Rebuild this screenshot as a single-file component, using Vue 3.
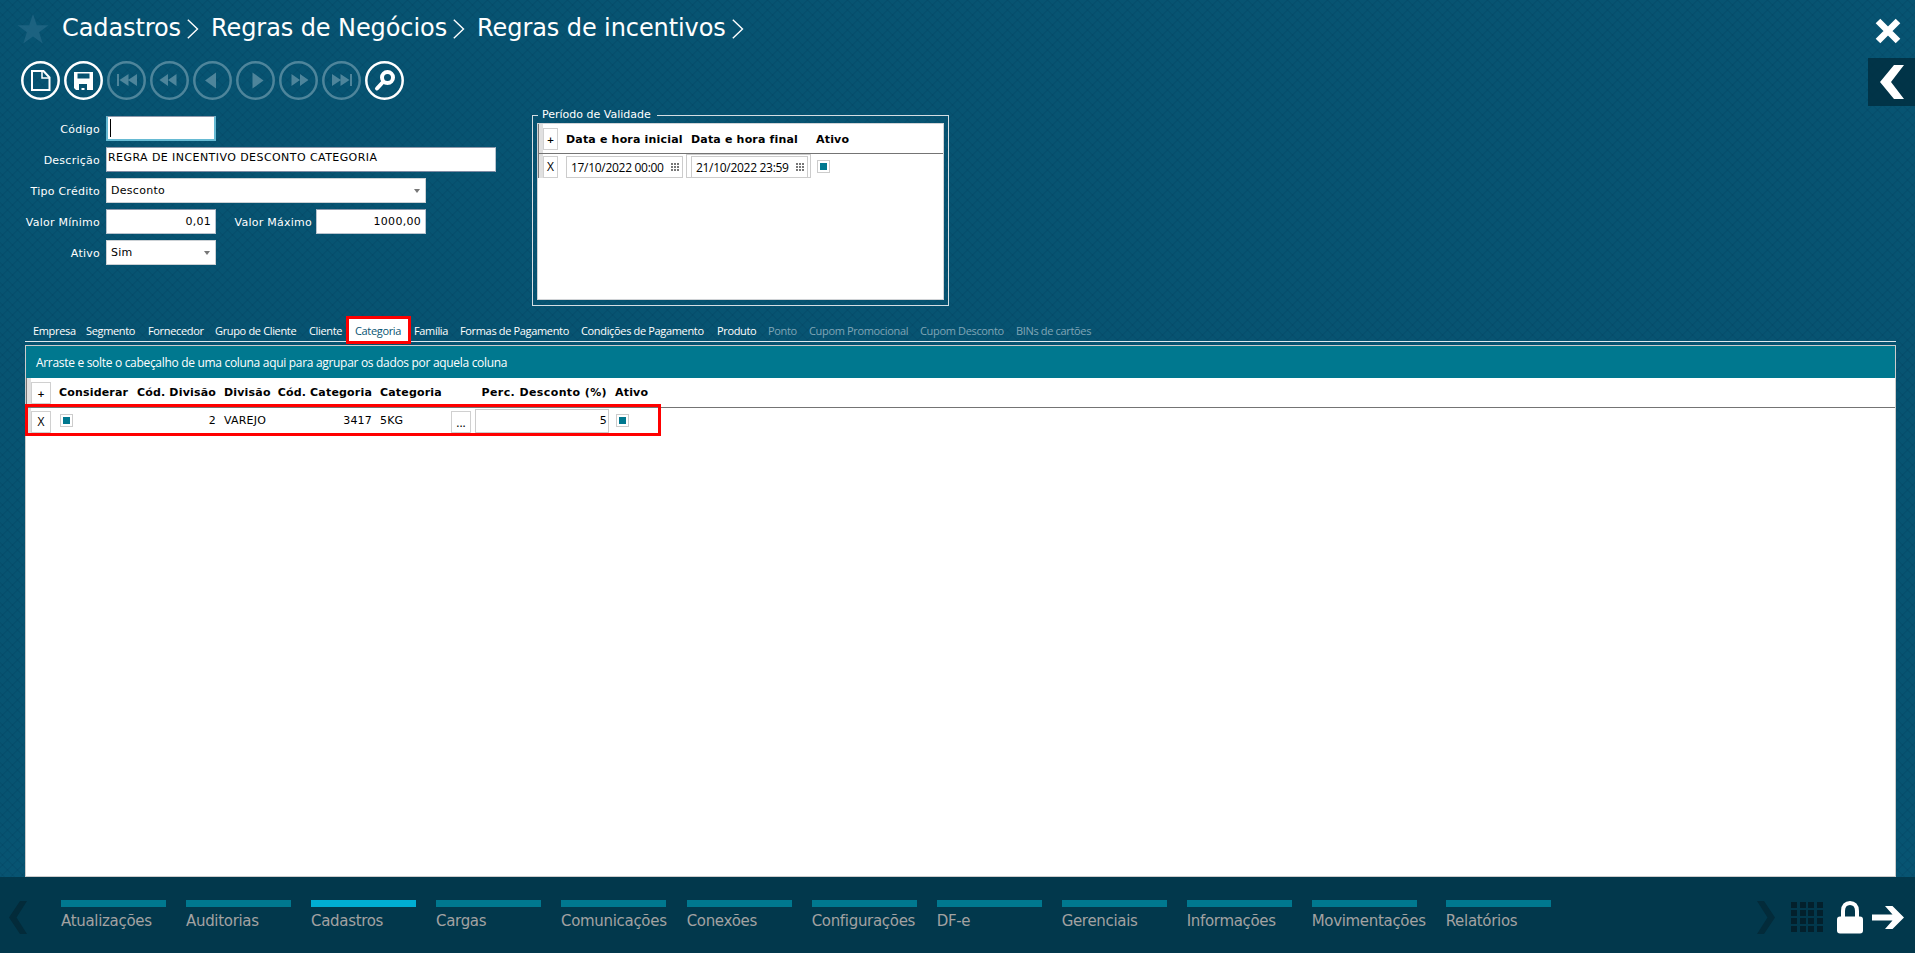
<script setup>
import { ref } from 'vue'

const breadcrumb = ['Cadastros', 'Regras de Negócios', 'Regras de incentivos']

const toolbar = [
  { id: 'new', enabled: true },
  { id: 'save', enabled: true },
  { id: 'first', path: 'M10 13h2v12h-2z M12.500 19l9-6v12z M21 19l9-6v12z', enabled: false },
  { id: 'rewind', path: 'M9.500 19l8.500-6v12z M18 19l8.500-6v12z', enabled: false },
  { id: 'previous', path: 'M12 19.500l11-8v16z', enabled: false },
  { id: 'next', path: 'M27.500 19.500l-11-8v16z', enabled: false },
  { id: 'forward', path: 'M29.500 19l-8.500-6v12z M21 19l-8.500-6v12z', enabled: false },
  { id: 'last', path: 'M28 13h2v12h-2z M27.500 19l-9-6v12z M19 19l-9-6v12z', enabled: false },
  { id: 'search', enabled: true },
]

const tabs = [
  { label: 'Empresa', width: 53 },
  { label: 'Segmento', width: 62 },
  { label: 'Fornecedor', width: 67 },
  { label: 'Grupo de Cliente', width: 94 },
  { label: 'Cliente', width: 46 },
  { label: 'Categoria', width: 59 },
  { label: 'Família', width: 46 },
  { label: 'Formas de Pagamento', width: 121 },
  { label: 'Condições de Pagamento', width: 136 },
  { label: 'Produto', width: 51 },
  { label: 'Ponto', width: 41, disabled: true },
  { label: 'Cupom Promocional', width: 111, disabled: true },
  { label: 'Cupom Desconto', width: 96, disabled: true },
  { label: 'BINs de cartões', width: 88, disabled: true },
]
const activeTab = ref('Categoria')

const modules = [
  'Atualizações', 'Auditorias', 'Cadastros', 'Cargas', 'Comunicações', 'Conexões',
  'Configurações', 'DF-e', 'Gerenciais', 'Informações', 'Movimentações', 'Relatórios',
]
const activeModule = ref('Cadastros')

const periods = [{ start: '17/10/2022 00:00', end: '21/10/2022 23:59' }]
const categories = [
  { divisionCode: 2, division: 'VAREJO', categoryCode: 3417, category: '5KG', discount: 5 },
]
</script>

<template>
  <div class="app">
    <header class="topbar">
      <svg class="star" viewBox="0 0 32 30">
        <path d="M16 0l3.800 11.300H31.500l-9.400 6.900 3.600 11.300L16 22.600l-9.700 6.900 3.600-11.300L.5 11.300h11.700z" />
      </svg>
      <nav class="breadcrumb">
        <span v-for="item in breadcrumb" :key="item" class="crumb">
          {{ item }}
          <svg viewBox="0 0 12 20"><path d="M.8 .8L10.500 10 .8 19.200" /></svg>
        </span>
      </nav>
      <svg class="close" viewBox="0 0 26 26"><path d="M3 3l20 20M23 3L3 23" /></svg>
    </header>

    <button class="side-toggle">
      <svg viewBox="0 0 24 34"><path d="M14 0h10L11 17l13 17H14L0 17z" /></svg>
    </button>

    <div class="toolbar">
      <button v-for="tool in toolbar" :key="tool.id" :class="{ off: !tool.enabled }">
        <svg viewBox="0 0 39 39">
          <circle class="ring" cx="19.500" cy="19.500" r="18.200" />
          <template v-if="tool.id === 'new'">
            <path class="line" d="M11 10h11.500l6 6.500V29H11z" />
            <path class="thin" d="M21 10v7h7" />
          </template>
          <path
            v-else-if="tool.id === 'save'"
            fill-rule="evenodd"
            d="M10 11h19v18H12l-2-2z M13.500 12.500v5h12v-5z M15 23v6h8v-6z M17.500 27h3v2h-3z"
          />
          <template v-else-if="tool.id === 'search'">
            <circle class="lens" cx="22.500" cy="16.500" r="5.500" />
            <path class="handle" d="M18 21l-6 6.500" />
          </template>
          <path v-else :d="tool.path" />
        </svg>
      </button>
    </div>

    <section class="details">
      <form class="fields" @submit.prevent>
        <div class="field">
          <label>Código</label>
          <div class="box short focused"><i class="caret"></i></div>
        </div>
        <div class="field">
          <label>Descrição</label>
          <div class="box long description">REGRA DE INCENTIVO DESCONTO CATEGORIA</div>
        </div>
        <div class="field">
          <label>Tipo Crédito</label>
          <div class="box medium select">Desconto<i class="arrow"></i></div>
        </div>
        <div class="field">
          <label>Valor Mínimo</label>
          <div class="box short number">0,01</div>
          <label class="second">Valor Máximo</label>
          <div class="box short number">1000,00</div>
        </div>
        <div class="field">
          <label>Ativo</label>
          <div class="box short select">Sim<i class="arrow"></i></div>
        </div>
      </form>

      <fieldset class="validity">
        <legend>Período de Validade</legend>
        <div class="period-grid">
          <div class="period-row period-head">
            <button class="mini plus">+</button>
            <b>Data e hora inicial</b>
            <b class="col-end">Data e hora final</b>
            <b class="col-active">Ativo</b>
          </div>
          <div v-for="period in periods" :key="period.start" class="period-row">
            <button class="mini">X</button>
            <div class="date">
              <span>{{ period.start }}</span>
              <svg viewBox="0 0 8 8"><path d="M0 1h8M0 4h8M0 7h8" /></svg>
            </div>
            <div class="date-cell">
              <div class="date">
                <span>{{ period.end }}</span>
                <svg viewBox="0 0 8 8"><path d="M0 1h8M0 4h8M0 7h8" /></svg>
              </div>
            </div>
            <i class="check"></i>
          </div>
        </div>
      </fieldset>
    </section>

    <nav class="tabs">
      <button
        v-for="tab in tabs"
        :key="tab.label"
        :class="{ active: tab.label === activeTab, disabled: tab.disabled }"
        :style="{ width: tab.width + 'px' }"
        @click="activeTab = tab.label"
      >
        {{ tab.label }}
      </button>
    </nav>

    <main class="data-grid">
      <div class="group-band">Arraste e solte o cabeçalho de uma coluna aqui para agrupar os dados por aquela coluna</div>
      <div class="grid-row grid-head">
        <button class="mini plus">+</button>
        <b>Considerar</b>
        <b class="right">Cód. Divisão</b>
        <b>Divisão</b>
        <b class="right">Cód. Categoria</b>
        <b>Categoria</b>
        <span></span>
        <b class="right percent">Perc. Desconto (%)</b>
        <b class="last">Ativo</b>
      </div>
      <div v-for="row in categories" :key="row.categoryCode" class="grid-row grid-item">
        <button class="mini">X</button>
        <i class="check"></i>
        <span class="right">{{ row.divisionCode }}</span>
        <span>{{ row.division }}</span>
        <span class="right">{{ row.categoryCode }}</span>
        <span>{{ row.category }}</span>
        <button class="mini dots">...</button>
        <div class="discount">{{ row.discount }}</div>
        <i class="check last"></i>
      </div>
    </main>

    <footer class="modules">
      <svg class="page-arrow" viewBox="0 0 18 33"><path d="M11 0h7L7.500 16.500 18 33h-7L0 16.500z" /></svg>
      <div class="module-list">
        <a v-for="name in modules" :key="name" :class="{ active: name === activeModule }">{{ name }}</a>
      </div>
      <svg class="page-arrow next" viewBox="0 0 18 33"><path d="M0 0h7l11 16.500L7 33H0l10.500-16.500z" /></svg>
      <div class="apps"><i v-for="n in 16" :key="n"></i></div>
      <svg class="lock" viewBox="0 0 26 33">
        <path class="shackle" d="M6 17v-7C6 4.500 9 2 13 2s7 2.500 7 8v7" />
        <rect y="15.500" width="26" height="17" rx="3" />
      </svg>
      <svg class="exit" viewBox="0 0 32 23">
        <path d="M0 8.500h20.500L13 0h7.500L32 11.500 20.500 23H13l7.500-8.500H0z" />
      </svg>
    </footer>
  </div>
</template>

<style>
body {
  margin: 0;
}
</style>

<style scoped>
*,
*::after {
  box-sizing: border-box;
}

.app {
  position: relative;
  display: flex;
  flex-direction: column;
  width: 1915px;
  height: 953px;
  overflow: hidden;
  background:
    repeating-linear-gradient(45deg, rgba(0, 30, 60, 0.09) 0 1px, transparent 1px 7.071px),
    repeating-linear-gradient(-45deg, rgba(0, 30, 60, 0.09) 0 1px, transparent 1px 7.071px),
    #075472;
  color: #fff;
  font-family: "DejaVu Sans", Verdana, sans-serif;
  font-size: 11px;
}

button {
  padding: 0;
  border: 0;
  background: none;
  color: inherit;
  font: inherit;
}

svg {
  display: block;
  flex: none;
  fill: currentColor;
}

.topbar {
  display: flex;
  align-items: flex-start;
  height: 61px;
  padding: 0 14px 0 17px;
}

.star {
  width: 32px;
  height: 30px;
  margin-top: 14px;
  color: #1c6280;
}

.breadcrumb {
  display: flex;
  flex: 1;
  margin-left: 13px;
  font-size: 24px;
  line-height: 57px;
  letter-spacing: -0.09px;
  white-space: nowrap;
}

.crumb {
  display: flex;
  align-items: center;
  gap: 6px;
  margin-right: 12px;
}

.crumb svg {
  width: 12px;
  height: 20px;
  margin-top: 1px;
  fill: none;
  stroke: #fff;
  stroke-width: 1.4;
}

.close {
  width: 26px;
  height: 26px;
  margin-top: 18px;
  stroke: #fff;
  stroke-width: 6.5;
}

.side-toggle {
  position: absolute;
  top: 58px;
  right: 0;
  display: flex;
  align-items: center;
  width: 47px;
  height: 48px;
  padding-left: 12px;
  background: rgba(0, 43, 60, 0.78);
}

.side-toggle svg {
  width: 24px;
  height: 34px;
}

.toolbar {
  display: flex;
  gap: 4px;
  height: 54px;
  padding-left: 21px;
}

.toolbar button {
  width: 39px;
  height: 39px;
}

.toolbar .off {
  color: #4e859b;
}

.ring,
.line,
.thin,
.lens,
.handle {
  fill: none;
  stroke: currentColor;
}

.ring {
  stroke-width: 2.5;
}

.line {
  stroke-width: 2;
}

.thin {
  stroke-width: 1.5;
}

.lens {
  stroke-width: 4;
}

.handle {
  stroke-width: 4;
  stroke-linecap: round;
}

.details {
  display: flex;
  height: 201px;
}

.fields {
  display: flex;
  flex-direction: column;
  gap: 6px;
  width: 532px;
  padding-top: 1px;
}

.field {
  display: flex;
  align-items: center;
  height: 25px;
}

.field label {
  width: 106px;
  padding: 2px 6px 0 0;
  letter-spacing: 0.25px;
  text-align: right;
  white-space: nowrap;
}

.field .second {
  width: 100px;
  padding-right: 4px;
}

.box {
  display: flex;
  align-items: center;
  height: 25px;
  padding: 0 5px;
  border: 1px solid #b9c4cf;
  border-top-color: #8d99ab;
  background: #fff;
  color: #000;
  letter-spacing: 0.28px;
  white-space: nowrap;
}

.short {
  width: 110px;
}

.medium {
  width: 320px;
}

.long {
  width: 390px;
}

.focused {
  padding: 0 2px;
  border: 2px solid #66bad3;
  border-top: 1px solid #8d99ab;
}

.caret {
  width: 1px;
  height: 18px;
  background: #000;
}

.description {
  padding: 0 1px 5px;
  border-bottom-color: #7d8ba3;
  letter-spacing: 0.43px;
}

.number {
  justify-content: flex-end;
  padding-right: 4px;
}

.select {
  justify-content: space-between;
  padding: 0 5px 0 4px;
  border-color: #ccd1d5;
}

.arrow {
  border: 3.5px solid transparent;
  border-top: 4px solid #777;
  border-bottom: 0;
}

.validity {
  display: flex;
  flex-direction: column;
  width: 417px;
  min-width: 0;
  height: 198px;
  margin: -7px 0 0;
  padding: 1px 4px 5px;
  border: 1px solid #d5dee3;
}

.validity legend {
  height: 14px;
  margin-left: 1px;
  padding: 0 6px 0 4px;
  line-height: 14px;
}

.period-grid {
  height: 178px;
  border: 1px solid #d0d3d6;
  background: #fff;
  color: #000;
}

/* the grey strip on the left is the row indicator */
.period-row,
.grid-row {
  display: grid;
  padding-left: 5px;
  background: linear-gradient(90deg, #777 1px, #e0e0e0 1px 5px, transparent 5px) no-repeat 0 0 / 5px 100%;
  white-space: nowrap;
}

.period-row {
  grid-template-columns: 23px 120px 131px 60px;
  align-items: end;
  height: 24px;
}

.period-head {
  align-items: center;
  height: 30px;
  border-bottom: 1px solid #747474;
}

.period-head b {
  padding-top: 2px;
}

.period-head b,
.grid-head b {
  letter-spacing: 0.18px;
}

.period-head .col-end {
  padding-left: 5px;
}

.col-active {
  margin-left: -1px;
}

.period-row .check {
  align-self: center;
}

.mini {
  display: grid;
  place-items: center;
  width: 15px;
  height: 22px;
  border: 1px solid #d0d0d0;
  background: #fff;
  color: #000;
  font-family: "Open Sans", "Segoe UI", sans-serif;
  font-size: 12px;
  line-height: 14px;
}

.plus {
  padding-top: 2px;
  font-family: "DejaVu Sans", Verdana, sans-serif;
  font-size: 9px;
  font-weight: bold;
}

.date {
  display: flex;
  align-items: center;
  justify-content: space-between;
  width: 117px;
  height: 22px;
  padding: 0 3px 0 4px;
  border: 1px solid #ccc;
  font-family: "Open Sans", "Segoe UI", sans-serif;
  font-size: 12px;
  letter-spacing: -0.3px;
}

.date svg {
  width: 8px;
  height: 8px;
  fill: none;
  stroke: #777;
  stroke-width: 2;
  stroke-dasharray: 2 1;
}

.date-cell {
  width: 125px;
  height: 24px;
  padding: 1px 0 0 4px;
  border: 1px solid #ccc;
}

.date-cell .date {
  height: 21px;
  border-bottom: 0;
}

.check {
  width: 13px;
  height: 13px;
  border: 1px solid #ccc;
  background: linear-gradient(#00788f, #00788f) center / 7px 7px no-repeat #fff;
}

.tabs {
  display: flex;
  width: 1871px;
  height: 26px;
  margin-left: 25px;
  padding: 3px 0 0 2px;
  border-bottom: 1px solid #dde8ec;
  font-family: "Open Sans", "Segoe UI", sans-serif;
  font-size: 11px;
  letter-spacing: -0.34px;
}

.tabs button {
  flex: none;
  height: 22px;
  padding: 1px 0 0 6px;
  letter-spacing: inherit;
  line-height: 22px;
  text-align: left;
  white-space: nowrap;
}

.tabs .active {
  position: relative;
  z-index: 1;
  background: #fff;
  box-shadow: 0 0 0 3px #f00;
  color: #075472;
}

.tabs .disabled {
  color: #7fa5b6;
}

.data-grid {
  position: relative;
  display: flex;
  flex: 1;
  flex-direction: column;
  width: 1871px;
  margin: 3px 0 0 25px;
  border: 1px solid #ccc;
  background: #fff;
  color: #000;
}

.group-band {
  height: 32px;
  padding-left: 10px;
  background: #00788f;
  color: #fff;
  font-family: "Open Sans", "Segoe UI", sans-serif;
  font-size: 12px;
  line-height: 34px;
  letter-spacing: -0.31px;
}

.grid-row {
  grid-template-columns: 20px 78px 87px 57px 99px 79px 20px 138px 50px;
  align-items: center;
  height: 30px;
}

.grid-row > * {
  margin-left: 8px;
}

.grid-row > .mini {
  width: 20px;
  margin-left: 0;
}

.grid-row > .right {
  margin: 0;
  text-align: right;
}

.grid-row > .percent {
  margin-right: 2px;
  letter-spacing: 0.4px;
}

.grid-row > .last {
  margin-left: 6px;
}

.grid-head {
  border-bottom: 1px solid #747474;
}

.grid-item {
  height: 25px;
  letter-spacing: 0.2px;
}

.grid-item > .mini {
  align-self: end;
}

.grid-item > .check {
  margin-left: 9px;
}

.grid-item > .check.last {
  margin-left: 7px;
}

.grid-item > .dots {
  padding-top: 2px;
}

.grid-item::after {
  content: "";
  position: absolute;
  top: 58px;
  left: -1px;
  width: 636px;
  height: 32px;
  border: 3px solid #f00;
}

.grid-row > .discount {
  height: 24px;
  margin: 0 0 0 4px;
  padding-right: 1px;
  border: 1px solid #ccc;
  line-height: 22px;
  text-align: right;
}

.modules {
  display: flex;
  align-items: flex-start;
  height: 76px;
  padding: 24px 11px 0 9px;
  background: #02384c;
}

.page-arrow {
  width: 18px;
  height: 33px;
  color: #032b3a;
}

.module-list {
  display: flex;
  flex: 1;
  gap: 20px;
  margin: -1px 0 0 34px;
}

.module-list a {
  min-width: 105px;
  padding-top: 3px;
  border-top: 7px solid #00788f;
  border-image: linear-gradient(90deg, #00788f 105px, transparent 105px) 7 0 0;
  color: #a2a2a2;
  font-size: 15px;
  line-height: 22px;
  letter-spacing: -0.31px;
  white-space: nowrap;
}

.module-list .active {
  border-image: linear-gradient(90deg, #00aed3 105px, transparent 105px) 7 0 0;
}

.apps {
  display: grid;
  grid-template-columns: repeat(4, 6px);
  gap: 2px 2.6px;
  width: 32px;
  margin: 1px 14px 0 16px;
}

.apps i {
  height: 6px;
  background: #03202c;
}

.lock {
  width: 26px;
  height: 33px;
}

.shackle {
  fill: none;
  stroke: #fff;
  stroke-width: 4;
}

.exit {
  width: 32px;
  height: 23px;
  margin: 5px 0 0 9px;
}
</style>
